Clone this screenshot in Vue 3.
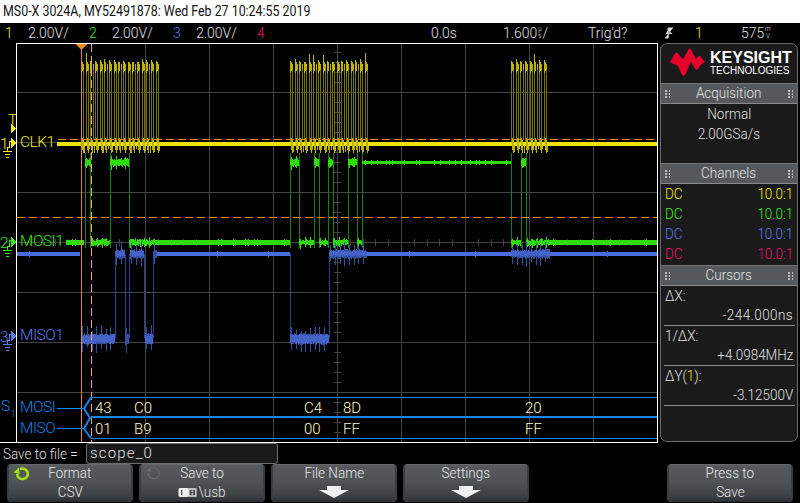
<script setup>
let seed = 12345
const rnd = () => {
  seed = (seed * 16807) % 2147483647
  return seed / 2147483647
}

const gridX = [81, 145, 209, 273, 337, 401, 465, 529, 593]
const gridY = [92, 142, 192, 242, 292, 342, 392]

const ticksV = []
for (let y = 52; y < 442; y += 10) ticksV.push(y)
const ticksH = []
for (let x = 17 + 12.8; x < 657; x += 12.8) ticksH.push(Math.round(x))

const gridPath = [
  ...gridX.map(x => `M${x + 0.5} 44V442`),
  ...gridY.map(y => `M17 ${y + 0.5}H657`),
  ...ticksV.map(y => `M334 ${y + 0.5}H341`),
  ...ticksH.map(x => `M${x + 0.5} 239V246`),
].join('')

/* yellow clock bursts */
const bursts = [[81, 156], [290, 366], [511, 548]]
let yDim = ''
let yBright = ''
for (const [a, b] of bursts) {
  for (let x = a; x < b; x += 4.66) {
    const p = Math.round(x)
    const q = Math.round(x + 2.3)
    yDim += `M${p + 0.5} 62V146M${q + 0.5} 68V140`
    const top = 59 + rnd() * 3 - (rnd() < 0.12 ? 6 : 0)
    yBright += `M${p + 0.5} ${top.toFixed(0)}V73M${p + 1.5} 62V71M${q + 0.5} 64V70`
    yBright += `M${p + 1.5} 138V150M${p + 2.5} 140V153M${q + 1.5} 146V${(149 + rnd() * 4).toFixed(0)}`
  }
}

/* digital levels: a fuzzy band with ringing spikes at each clock edge */
function fuzz(a, b, y0, y1, spike) {
  let s = ''
  let next = a + 1
  for (let x = a; x < b; x++) {
    let t = y0 + Math.round(rnd() * 2)
    let u = y1 - Math.round(rnd() * 2)
    if (x >= next) {
      t -= Math.round(spike * (0.4 + rnd() * 0.6))
      u += Math.round(spike * (0.4 + rnd() * 0.6))
      next += 4.66
    }
    s += `M${x + 0.5} ${t}V${u}`
  }
  return s
}
function clean(a, b, y0, y1, p) {
  let s = ''
  for (let y = y0; y < y1; y++) s += `M${a} ${y + 0.5}H${b}`
  for (let x = a; x < b; x += 3) {
    if (rnd() < p) s += `M${x + 0.5} ${y0 - 1}v${y1 - y0 + 2}`
  }
  return s
}

const gEdges = [85, 90, 110, 129, 290, 299, 314, 319, 328, 333, 348, 357, 362, 511, 521, 526]
const gDim = gEdges.map(x => `M${x + 0.5} 153V248`).join('')
const gBright =
  [[66, 84], [155, 290], [550, 657]].map(([a, b]) => clean(a, b, 240, 245, 0.2)).join('') +
  [[91, 110], [129, 155], [299, 314], [319, 328], [333, 348], [357, 362], [511, 521], [526, 550]]
    .map(([a, b]) => fuzz(a, b, 239, 246, 3)).join('') +
  [[85, 91], [110, 129], [290, 299], [314, 319], [328, 333], [348, 357], [521, 526]]
    .map(([a, b]) => fuzz(a, b, 158, 167, 3)).join('') +
  clean(362, 511, 161, 164, 0.3)

const bEdges = [115, 125, 129, 144, 153, 290, 329]
const bDim = bEdges.map(x => `M${x + 0.5} 254V338`).join('')
const bClean = [[17, 80], [157, 290], [367, 511], [550, 657]]
  .map(([a, b]) => clean(a, b, 252, 256, 0.02)).join('')
const bNoiseHigh = [[115, 125], [130, 144], [153, 157], [329, 367], [511, 550]]
  .map(([a, b]) => fuzz(a, b, 249, 259, 9)).join('')
const bNoiseLow = [[81, 115], [125, 129], [145, 153], [290, 329]]
  .map(([a, b]) => fuzz(a, b, 333, 345, 9)).join('')
const bCore = [[115, 125], [130, 144], [329, 367], [511, 550]]
  .map(([a, b]) => fuzz(a, b, 250, 257, 0)).join('') +
  [[81, 115], [145, 153], [290, 329]].map(([a, b]) => fuzz(a, b, 334, 344, 0)).join('')

const channels = [
  { n: '1', label: 'CLK1', y: 143, color: '#f4ec00' },
  { n: '2', label: 'MOSI1', y: 242, color: '#38ea10' },
  { n: '3', label: 'MISO1', y: 336, color: '#5a7cf0' },
]

const busValues = [
  { x: 95, a: '43', b: '01' },
  { x: 134, a: 'C0', b: 'B9' },
  { x: 304, a: 'C4', b: '00' },
  { x: 343, a: '8D', b: 'FF' },
  { x: 525, a: '20', b: 'FF' },
]

const dcRows = [
  { cls: 'c1' }, { cls: 'c2' }, { cls: 'c3' }, { cls: 'c4' },
]
</script>

<template>
  <div class="scope-ui">
    <header class="title"><span>MS0-X 3024A, MY52491878: Wed Feb 27 10:24:55 2019</span></header>

    <div class="status">
      <span class="c1">1</span><span>2.00V/</span>
      <span class="c2">2</span><span>2.00V/</span>
      <span class="c3">3</span><span>2.00V/</span>
      <span class="c4">4</span>
      <span>0.0s</span>
      <span class="unit-cell">1.600<span class="stack"><i>µ</i><i>s</i></span>/</span>
      <span>Trig'd?</span>
      <span class="edge">
        <svg width="9" height="12" viewBox="0 0 9 12"><path d="M0 11H3.5V1H9M1 6.5H8M4 3L1.5 6.5H6.5Z" fill="#ddd" stroke="#ddd" stroke-width="1"/></svg>
      </span>
      <span class="c1">1</span>
      <span class="unit-cell">575<span class="stack small"><i>m</i><i>V</i></span></span>
    </div>

    <main class="main">
      <svg class="screen" width="658" height="400" viewBox="0 43 658 400" shape-rendering="crispEdges">
        <path :d="gridPath" stroke="#444" fill="none" />

        <!-- yellow -->
        <path :d="yDim" stroke="#767400" fill="none" />
        <rect x="57" y="142" width="600" height="4" fill="#ece400" />
        <path :d="yBright" stroke="#bcb400" fill="none" />

        <!-- green -->
        <path :d="gDim" stroke="#1a8010" fill="none" />
        <path :d="gBright" stroke="#2fdc08" fill="none" />

        <!-- blue -->
        <path :d="bDim" stroke="#2a3f96" fill="none" />
        <path :d="bNoiseHigh + bNoiseLow" stroke="#33509f" fill="none" />
        <path :d="bCore" stroke="#4562c8" fill="none" />
        <path :d="bClean" stroke="#4a6ce0" fill="none" />

        <!-- cursors and markers -->
        <path d="M58 139.5H657" stroke="#e08a20" stroke-dasharray="8 4" fill="none" />
        <path d="M17 217.5H657" stroke="#e08a20" stroke-dasharray="8 4" fill="none" />
        <path d="M81.5 44V442" stroke="#e08a20" fill="none" />
        <path d="M91.5 44V442" stroke="#f0a860" stroke-dasharray="8 4" fill="none" />
        <path d="M75.5 44H87.5L81.5 50Z" fill="#f08a18" shape-rendering="auto" />

        <!-- serial bus -->
        <g fill="none" stroke="#0a86ec">
          <path d="M91 397.5H657M91 438.5H657" />
          <path d="M91 417H657" stroke-width="2" />
          <path d="M57 408.5H83M57 428.5H83" />
          <path d="M91 397.5L84 408.5L90 418L84 428.5L91 438.5" stroke-width="2" shape-rendering="auto" />
        </g>
        <text class="t bus" x="1" y="411">S</text>
        <text class="t bus tiny" x="10.5" y="417">1</text>
        <text class="t bus label" x="20" y="412">MOSI</text>
        <text class="t bus label" x="20" y="433">MISO</text>
        <template v-for="v in busValues" :key="v.x">
          <text class="t val" :x="v.x" y="413">{{ v.a }}</text>
          <text class="t val" :x="v.x" y="434">{{ v.b }}</text>
        </template>

        <!-- channel markers -->
        <text class="t" x="8" y="125" fill="#f4ec00">T</text>
        <path d="M11 124L16 128.5L11 133Z" fill="#f4ec00" />
        <g v-for="c in channels" :key="c.n">
          <text class="t" x="0" :y="c.y + 6" :fill="c.color">{{ c.n }}</text>
          <text class="t label" x="20" :y="c.y + 4" :fill="c.color">{{ c.label }}</text>
          <path :d="`M11 ${c.y - 5}L16 ${c.y}L11 ${c.y + 5}Z`" :fill="c.color" />
          <path
            :d="`M7.5 ${c.y + 8}V${c.y + 4}H9.5V${c.y - 2}H12M3 ${c.y + 8.5}H12M5 ${c.y + 11.5}H10M6 ${c.y + 14.5}H9`"
            :stroke="c.color"
            fill="none"
          />
        </g>

        <!-- frame -->
        <path d="M16.5 443V43.5H657.5V442.5H0" stroke="#fff" fill="none" />
      </svg>

      <aside class="panel">
        <div class="logo">
          <svg class="wave" width="38" height="30" viewBox="0 0 38 30">
            <path fill="#e8002d" d="M1 15Q3 11 5 8Q7 5 8.5 6Q11 9 14 12.5Q17 7 19 3Q21 0.5 22.5 3Q24.5 8 27 12Q29 8.5 31 9Q33 12 36 15Q33 16.5 31 19Q29 23 27 23Q25 20 22 15Q20 18 18 24Q16 29 14 29Q12 27 10 21Q9 18 7 18Q4 17 1 15Z" />
          </svg>
          <div class="brand">
            <b>KEYSIGHT</b>
            <span>TECHNOLOGIES</span>
          </div>
        </div>

        <div class="phead"><i class="grip"></i><span class="n">Acquisition</span><i class="grip"></i></div>
        <div class="acq">
          <div class="row center"><span class="n">Normal</span></div>
          <div class="row center"><span class="n">2.00GSa/s</span></div>
        </div>

        <div class="phead"><i class="grip"></i><span class="n">Channels</span><i class="grip"></i></div>
        <div class="chans">
          <div v-for="r in dcRows" :key="r.cls" class="row split" :class="r.cls">
            <span class="n left">DC</span><span class="n to-right">10.0:1</span>
          </div>
        </div>

        <div class="phead"><i class="grip"></i><span class="n">Cursors</span><i class="grip"></i></div>
        <div class="cursors">
          <div class="row"><span class="n left">ΔX:</span></div>
          <div class="row right rule"><span class="n to-right wide">-244.000ns</span></div>
          <div class="row"><span class="n left">1/ΔX:</span></div>
          <div class="row right rule"><span class="n to-right">+4.0984MHz</span></div>
          <div class="row"><span class="n left">ΔY(<span class="c1">1</span>):</span></div>
          <div class="row right rule"><span class="n to-right">-3.12500V</span></div>
        </div>
      </aside>
    </main>

    <div class="save">
      <span class="save-label">Save to file =</span>
      <span class="input">scope_0</span>
    </div>

    <nav class="keys">
      <button class="key">
        <svg class="key-icon" width="18" height="15" viewBox="0 0 18 15">
          <path d="M7 3.2A5.3 5.3 0 1 1 4.2 8" fill="none" stroke="#a6e010" stroke-width="2.6" />
          <path d="M0.5 6.5L6 1.5L6.5 8Z" fill="#a6e010" />
        </svg>
        <span>Format</span>
        <span>CSV</span>
      </button>
      <button class="key">
        <svg class="key-icon" width="18" height="15" viewBox="0 0 18 15">
          <path d="M7 2.2A5.5 5.5 0 1 1 3.2 7" fill="none" stroke="#6a6e70" stroke-width="1" />
          <path d="M1 5L5.5 1L6 6Z" fill="#6a6e70" />
        </svg>
        <span>Save to</span>
        <span class="usb">
          <svg width="23" height="11" viewBox="0 0 21 11">
            <rect x="0" y="1" width="12" height="9" rx="2" fill="#eee" />
            <rect x="12" y="2" width="8" height="7" fill="none" stroke="#eee" stroke-width="1.4" />
            <rect x="15" y="3.5" width="2" height="1.4" fill="#eee" />
            <rect x="15" y="6.2" width="2" height="1.4" fill="#eee" />
            <rect x="3" y="3" width="1.4" height="5" fill="#444" />
          </svg>\usb
        </span>
      </button>
      <button class="key">
        <span>File Name</span>
        <svg class="arrow" width="30" height="12" viewBox="0 0 30 12"><path d="M8 0H22V4H30L15 12L0 4H8Z" fill="#f0f0f0" /></svg>
      </button>
      <button class="key">
        <span>Settings</span>
        <svg class="arrow" width="30" height="12" viewBox="0 0 30 12"><path d="M8 0H22V4H30L15 12L0 4H8Z" fill="#f0f0f0" /></svg>
      </button>
      <div></div>
      <button class="key">
        <span>Press to</span>
        <span>Save</span>
      </button>
    </nav>
  </div>
</template>

<style>
html, body { background: #000; margin: 0; }
</style>

<style scoped>
.scope-ui {
  width: 800px;
  height: 503px;
  overflow: hidden;
  background: #000;
  color: #e0e0e0;
  display: flex;
  flex-direction: column;
  font-family: "Roboto", "Liberation Sans", sans-serif;
  font-weight: 300;
  font-size: 15.5px;
}
.title {
  height: 23px;
  line-height: 23px;
  background: #fff;
  color: #111;
  padding-left: 3px;
  white-space: nowrap;
}
.title span { display: inline-block; transform: scaleX(0.8); transform-origin: left; font-weight: 400; }
.status {
  height: 20px;
  line-height: 20px;
  padding-left: 5px;
  display: grid;
  grid-template-columns: 23px 61px 23px 61px 23px 61px 174px 72px 85px 77px 30px 46px 1fr;
  white-space: nowrap;
}
.status > span { transform: scaleX(0.9); transform-origin: left; }
.unit-cell { display: inline-flex; align-items: center; }
.stack { display: inline-flex; flex-direction: column; line-height: 7px; font-size: 7px; margin: 0 1px; }
.stack i { font-style: normal; display: block; text-align: center; }
.edge { display: flex; align-items: center; }
.c1 { color: #f4ec00; }
.c2 { color: #38ea10; }
.c3 { color: #5a7cf0; }
.c4 { color: #f0106c; }

.main { display: flex; height: 400px; }
.screen { display: block; flex: none; }
.t {
  font-family: "Roboto", "Liberation Sans", sans-serif;
  font-weight: 300;
  font-size: 15.5px;
}
.label { letter-spacing: -0.5px; }
.bus { fill: #0a86ec; }
.tiny { font-size: 9px; }
.val { fill: #fffcc0; font-size: 15px; }

.panel {
  width: 138px;
  margin-left: 2px;
  height: 399px;
  box-sizing: border-box;
  border: 1px solid #6c6c6c;
  border-radius: 7px;
  background: #1a1a1a;
  overflow: hidden;
}
.logo {
  height: 39px;
  display: flex;
  align-items: center;
  gap: 3px;
  padding-left: 8px;
  box-sizing: border-box;
}
.wave { margin-bottom: 3px; }
.brand { display: flex; flex-direction: column; color: #fff; font-family: "Liberation Sans", sans-serif; font-weight: 400; }
.brand b { font-size: 16px; line-height: 14px; }
.brand span { font-size: 10px; line-height: 11px; }
.phead {
  height: 19px;
  line-height: 19px;
  background: #55595c;
  border-top: 1px solid #777;
  border-bottom: 1px solid #8a8a8a;
  display: flex;
  justify-content: space-between;
  align-items: center;
  padding: 0 4px;
  color: #e2e2e2;
}
.grip {
  width: 5px;
  height: 8px;
  background-image: radial-gradient(circle at 1px 1px, #bbb 1px, transparent 1px);
  background-size: 4px 3px;
}
.n { display: inline-block; transform: scaleX(0.87); }
.n.left { transform-origin: left; }
.n.to-right { transform-origin: right; }
.n.wide { letter-spacing: 0.5px; }
.row { height: 20px; line-height: 20px; padding: 0 4px; white-space: nowrap; }
.center { text-align: center; }
.right { text-align: right; }
.split { display: flex; justify-content: space-between; }
.acq { height: 59px; }
.chans { height: 81px; }
.rule { border-bottom: 1px solid #8a8a8a; height: 19px; margin: 0 2px 0 3px; padding: 0 2px 0 0; line-height: 19px; }

.save { height: 21px; display: flex; align-items: center; padding-left: 3px; }
.save-label { width: 83px; flex: none; white-space: nowrap; transform: scaleX(0.87); transform-origin: left; }
.input {
  width: 187px;
  height: 19px;
  line-height: 19px;
  border: 1px solid #6c6c6c;
  border-radius: 3px;
  background: #1a1a1a;
  padding-left: 3px;
  font-size: 15px;
  letter-spacing: 1.2px;
}
.keys {
  display: grid;
  grid-template-columns: repeat(6, 126px);
  column-gap: 6px;
  padding-left: 7px;
  height: 38px;
}
.key {
  position: relative;
  height: 38px;
  padding: 0;
  border: 0;
  border-left: 2px solid #3c3f42;
  border-right: 2px solid #3c3f42;
  border-radius: 4px;
  background: linear-gradient(#6a6e70 0, #55595b 2px, #505456 45%, #3c4042 85%, #2c2f31 100%);
  color: #e8e8e8;
  font: inherit;
  display: flex;
  flex-direction: column;
  align-items: center;
}
.key > span { height: 19px; line-height: 19px; display: flex; align-items: center; gap: 1px; transform: scaleX(0.87); }
.key-icon { position: absolute; left: 4px; top: 2px; }
.arrow { margin-top: 3px; }
</style>
